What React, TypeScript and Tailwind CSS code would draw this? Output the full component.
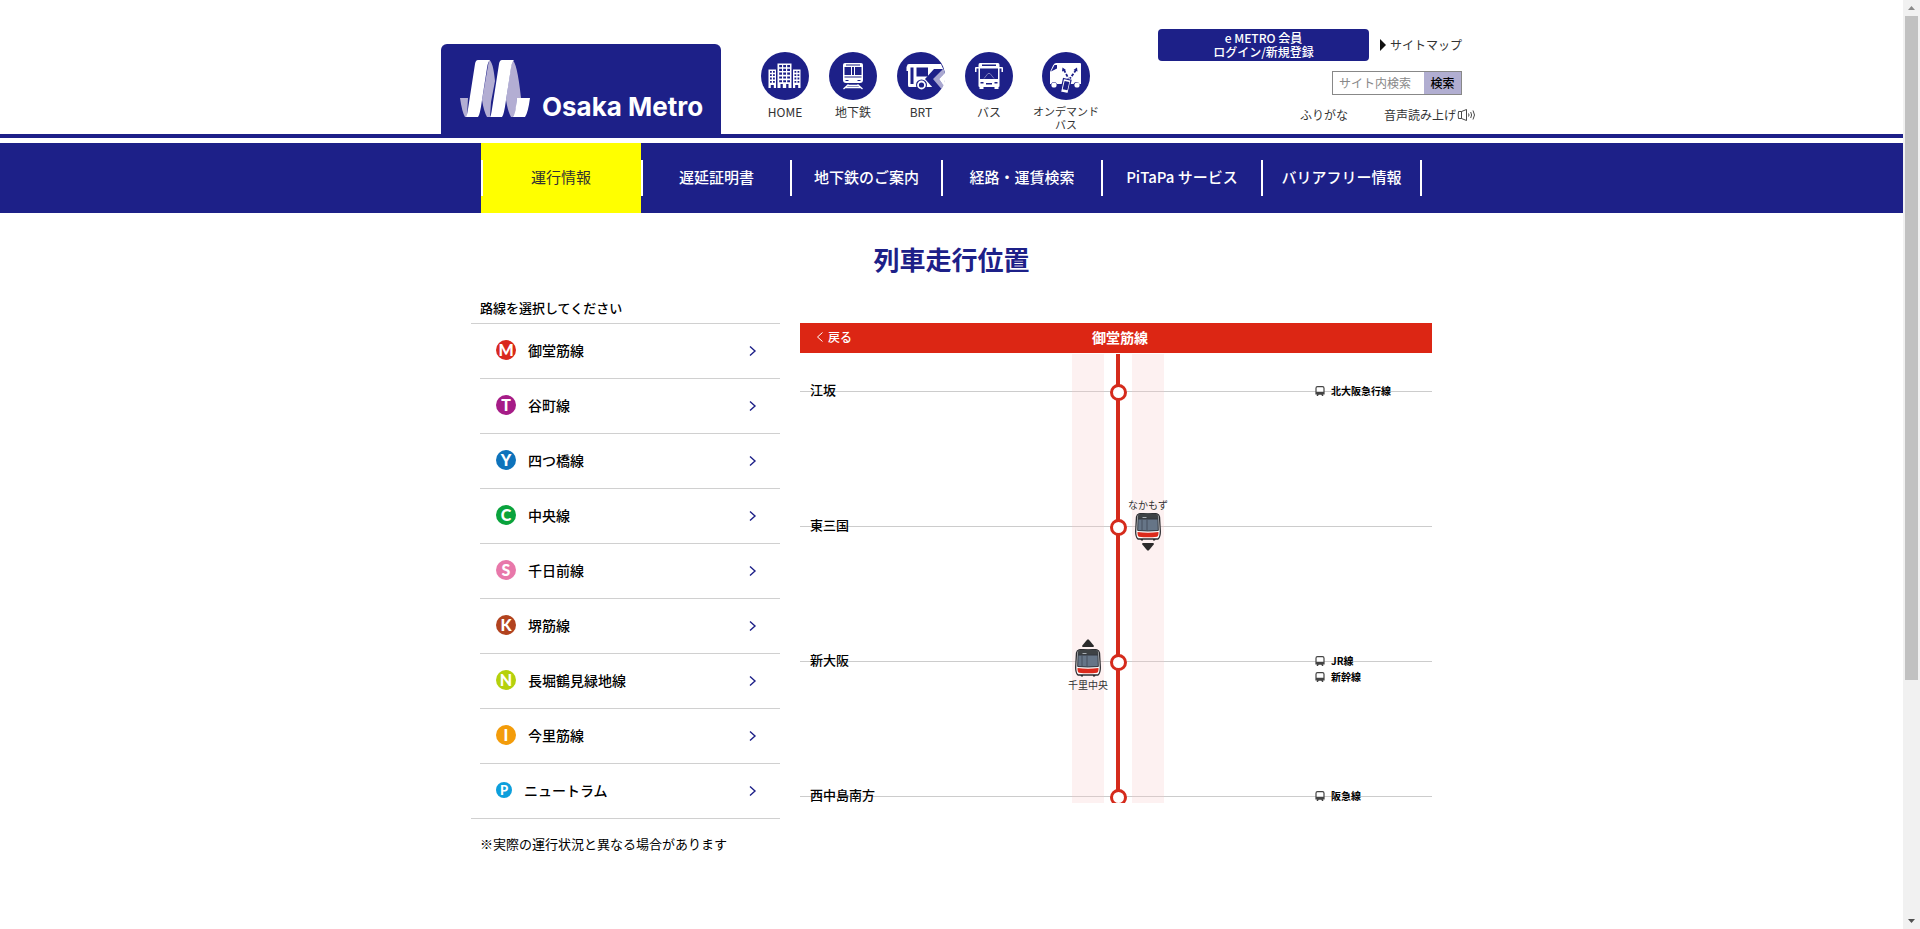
import React from "react";

const Building = () => (
  <svg viewBox="0 0 48 48" className="size-12" aria-hidden="true">
    <circle cx="24" cy="24" r="24" fill="#1d2088" />
    <path
      fill="#fff"
      fillRule="evenodd"
      d="M7.5 17.5h7.5V36h-2.2v-3h-3v3H7.500zM9 19v1.800h1.800V19zm3 0v1.800h1.800V19zM9 22.300v1.800h1.800v-1.800zm3 0v1.800h1.800v-1.800zM9 25.600v1.800h1.800v-1.800zm3 0v1.800h1.800v-1.800zM9 28.900v1.800h1.800v-1.800zm3 0v1.800h1.800v-1.800z
      M16.500 11.500h14V36h-3v-4h-2.300v4h-3.400v-4h-2.300v4h-3zM18.200 13v2.200h2.800V13zm4 0v2.200h2.800V13zm4 0v2.200h2.800V13zM18.200 16.800V19h2.800v-2.200zm4 0V19h2.800v-2.200zm4 0V19h2.800v-2.200zM18.200 20.600v2.200h2.800v-2.200zm4 0v2.200h2.800v-2.200zm4 0v2.200h2.800v-2.200zM18.200 24.400v2.200h2.800v-2.200zm4 0v2.200h2.800v-2.200zm4 0v2.200h2.800v-2.200zM18.200 28.200v2h2.800v-2zm4 0v2h2.800v-2zm4 0v2h2.800v-2z
      M32 17.500h7.500V36h-2.300v-3h-3v3H32zM33.500 19v1.800h1.800V19zm3 0v1.800h1.800V19zM33.500 22.300v1.800h1.800v-1.800zm3 0v1.800h1.800v-1.800zM33.500 25.600v1.800h1.800v-1.800zm3 0v1.800h1.800v-1.800zM33.500 28.900v1.800h1.800v-1.800zm3 0v1.800h1.800v-1.800z"
    />
  </svg>
);

const Subway = () => (
  <svg viewBox="0 0 48 48" className="size-12" aria-hidden="true">
    <circle cx="24" cy="24" r="24" fill="#1d2088" />
    <path d="M16 11h16q2 0 2 2v15q0 3-3 3H17q-3 0-3-3V13q0-2 2-2z" fill="#fff" />
    <path d="M17 12.500h14v1H17zM15.500 15h6.500v8h-6.500zM26 15h6.500v8H26zM23 15h2v8h-2z" fill="#1d2088" />
    <path d="M15.500 24.500h17v1h-17zM16.500 28h3v1h-3zM28.500 28h3v1h-3z" fill="#1d2088" />
    <path d="M19.500 32.500 14.500 37M28.500 32.500l5 4.500M18 33.500h12M16.500 35.500h15" stroke="#fff" strokeWidth="1.300" fill="none" />
  </svg>
);

const Brt = () => (
  <svg viewBox="0 0 48 48" className="size-12" aria-hidden="true">
    <circle cx="24" cy="24" r="24" fill="#1d2088" />
    <path d="M10 14q0-2 2-2h32q3.500 6 3.500 12 0 6-2.500 11H12q-1 0-1-2V19H9.500v-4z" fill="#fff" />
    <path d="M13.500 15.500h3V32h-3zM19.500 15.500H31v9H19.500z" fill="#1d2088" />
    <path d="M37 17h8.500q2.500 7 1.500 13l-3.500 7H37l-9-10z" fill="#1d2088" />
    <path d="M45.500 17.500 36 27l8.500 10 2-3.500L42 27l5.800-6q-.8-2-2.300-3.500z" fill="#aaa8d0" />
    <path d="M47.800 21 42 27l4.500 6.500q2.500-6 1.300-12.500z" fill="#fff" />
    <circle cx="24.500" cy="33" r="5.500" fill="#1d2088" />
    <circle cx="24.500" cy="33" r="3.500" fill="none" stroke="#fff" strokeWidth="1.800" />
  </svg>
);

const Bus = () => (
  <svg viewBox="0 0 48 48" className="size-12" aria-hidden="true">
    <circle cx="24" cy="24" r="24" fill="#1d2088" />
    <path d="M15 11h18q1.500 0 1.500 2v2H37q1 0 1 1v4h-1.500v-3.500h-2V34q0 1-1 1v2h-4v-2h-11v2h-4v-2q-1 0-1-1V16.500h-2V20H10v-4q0-1 1-1h2.500v-2q0-2 1.500-2z" fill="#fff" />
    <path d="M17 12.500h14v1.500H17zM15 16.500h18V27H15zM15.500 30h3v1.500h-3zM29.500 30h3v1.500h-3zM21 31h6v1.500h-6z" fill="#1d2088" />
    <path d="m19 26.500 4-5h2l4 5" stroke="#7c7bb8" fill="none" />
  </svg>
);

const OnDemandBus = () => (
  <svg viewBox="0 0 48 48" className="size-12" aria-hidden="true">
    <circle cx="24" cy="24" r="24" fill="#1d2088" />
    <path d="M16 11h22q1 0 1 1v20h-1.500a3.300 3.300 0 0 0-6 0H15a3.300 3.300 0 0 0-6 0H8V20l3-6.500q1-2.500 3-2.500z" fill="#fff" />
    <path d="m12.500 13-3.500 6.500 6-3V13z" fill="#1d2088" />
    <circle cx="12" cy="33" r="2.600" fill="#fff" />
    <circle cx="35" cy="33" r="2.600" fill="#fff" />
    <path d="m22 18 4.500 8.500M34 18l-6 8.500" stroke="#1d2088" strokeWidth="1.800" strokeDasharray="3 1.500" fill="none" />
    <path d="m20 19.500 0.500-4 3.500 2.500zM35.500 19.500l-.5-4-3.500 2.500z" fill="#1d2088" />
    <path d="m21.500 26.500 7.500 1.700-3 13.500-7.500-1.700z" fill="#fff" stroke="#1d2088" strokeWidth="1.200" />
    <path d="m22.600 29 4.700 1-1.900 8.300-4.700-1z" fill="#1d2088" />
  </svg>
);

const shortcuts = [
  { label: "HOME", icon: Building },
  { label: "地下鉄", icon: Subway },
  { label: "BRT", icon: Brt },
  { label: "バス", icon: Bus },
];

const menu = ["遅延証明書", "地下鉄のご案内", "経路・運賃検索", "PiTaPa サービス", "バリアフリー情報"];

const lines = [
  { code: "M", name: "御堂筋線", color: "bg-[#d9291c]" },
  { code: "T", name: "谷町線", color: "bg-[#a61c87]" },
  { code: "Y", name: "四つ橋線", color: "bg-[#0e73bb]" },
  { code: "C", name: "中央線", color: "bg-[#0aa33c]" },
  { code: "S", name: "千日前線", color: "bg-[#e878aa]" },
  { code: "K", name: "堺筋線", color: "bg-[#b2431f]" },
  { code: "N", name: "長堀鶴見緑地線", color: "bg-[#b5d10c]" },
  { code: "I", name: "今里筋線", color: "bg-[#f39c0a]" },
];

const stations = [
  { name: "江坂", transfers: ["北大阪急行線"] },
  { name: "東三国", transfers: [] },
  { name: "新大阪", transfers: ["JR線", "新幹線"] },
  { name: "西中島南方", transfers: ["阪急線"] },
];

const Chevron = () => (
  <svg viewBox="0 0 8 12" className="h-3 w-2" fill="none" stroke="#1d2088" strokeWidth="1.400" aria-hidden="true">
    <path d="m1 1.500 5 4.500-5 4.500" />
  </svg>
);

const TransferIcon = () => (
  <svg viewBox="0 0 10 10" className="size-[10px]" aria-hidden="true">
    <path d="M2.500.7h5q1.500 0 1.500 1.500V8H1V2.200Q1 .7 2.500.7z" fill="#fff" stroke="#444" strokeWidth="1.200" />
    <path d="M1 5.800h8V7.500l-1 1H2l-1-1zM2.500 8h1.500l-1 2H1.500zM6 8h1.500l1 2H7z" fill="#444" />
  </svg>
);

const Train = () => (
  <svg viewBox="0 0 26 28" className="block h-7 w-[26px]" aria-hidden="true">
    <path d="M5 25h3v2.500H6zM18 25h3l-1 2.500h-2z" fill="#222" />
    <path d="M4 .8Q13-.4 22 .8q2 .5 2.500 3L25.300 18q.2 6-2.300 8H3Q.5 24 .7 18L1.500 3.800Q2 1.300 4 .8z" fill="#fff" stroke="#2c2c30" strokeWidth="1.300" />
    <path d="M4.500 1Q13 0 21.500 1q1.500.5 2 3v2h-21V4q.5-2.500 2-3z" fill="#3e4245" />
    <path d="M3 6h20l.3 11.500q-10 1-20.600 0z" fill="#667587" stroke="#32373f" strokeWidth="1" />
    <path d="M7 6v11M12 6v11.500" stroke="#46505e" strokeWidth="1" />
    <path d="M7.500 4h4v1h-4z" fill="#a9afb5" />
    <path d="M2.500 19q10.500 1.500 21 0 .2 4-1.500 4.800-9 1-18 0Q2.300 23 2.500 19z" fill="#dc2a1c" />
  </svg>
);

function Logo() {
  return (
    <a href="#" className="flex h-[90px] w-[280px] shrink-0 items-end gap-3 self-end rounded-t-md bg-[#1d2088] pb-[17px] pl-[19px]">
      <svg viewBox="0 0 70 57" className="h-[57px] w-[70px] shrink-0" aria-hidden="true">
        <path d="M0 38h8l-1 19H5Q2 52 0 38zM29 0q4 1 6 21l-4 21-1 15h-3Q24 52 22 40zM52 0q5 1 9 38h-4l-2 19h-4Q48 52 46 40z" fill="#b3aed3" />
        <path d="M15 4q.6-4 3-4h12q-2 1-3 8l-5 32q-2 15-4 17H6q1-1 2-8zM39 4q.6-4 3-4h12q-2 1-3 8l-5 32q-2 15-4 17H30q1-1 2-8zM57 38h13q-2 15-5 19H53q2-2 3-11z" fill="#fff" />
      </svg>
      <span className="-mb-[6px] font-[Inter,sans-serif] text-[26px] leading-8 font-bold whitespace-nowrap text-white">Osaka Metro</span>
    </a>
  );
}

function Header() {
  return (
    <header className="border-b-4 border-[#1d2088]">
      <div className="mx-auto flex h-[134px] max-w-[1021px] items-start">
        <Logo />
        <nav aria-label="サイト" className="ml-10 flex gap-5 pt-[52px] text-center text-xs leading-[13px] text-[#333]">
          {shortcuts.map(({ label, icon: Icon }) => (
            <a key={label} href="#" className="flex w-12 flex-col items-center gap-[5px] whitespace-nowrap">
              <Icon />
              {label}
            </a>
          ))}
          <a href="#" className="flex w-[66px] flex-col items-center gap-[5px] text-[11px] leading-[13px] whitespace-nowrap">
            <OnDemandBus />
            <span>
              オンデマンド
              <br />
              バス
            </span>
          </a>
        </nav>
        <div className="ml-auto flex w-[304px] flex-col items-end pt-[29px] text-xs text-[#333]">
          <div className="flex w-full items-center justify-between">
            <a href="#" className="w-[211px] rounded bg-[#1d2088] py-[2px] text-center leading-[14px] font-medium text-white">
              e METRO 会員
              <br />
              ログイン/新規登録
            </a>
            <a href="#" className="flex items-center gap-1">
              <svg viewBox="0 0 6 12" className="h-3 w-[6px]" aria-hidden="true">
                <path d="M0 0l6 6-6 6z" fill="#111" />
              </svg>
              サイトマップ
            </a>
          </div>
          <form className="mt-[10px] flex h-6 w-[130px] border border-[#888]" onSubmit={(e) => e.preventDefault()}>
            <input type="search" aria-label="サイト内検索" placeholder="サイト内検索" className="min-w-0 flex-1 bg-white pl-[6px] placeholder:text-[#888]" />
            <button type="submit" className="w-[37px] bg-[#b1aed1] font-medium text-black">
              検索
            </button>
          </form>
          <div className="-mr-[14px] mt-3 flex items-center gap-9 leading-4 whitespace-nowrap">
            <a href="#">ふりがな</a>
            <a href="#" className="flex items-center">
              音声読み上げ
              <svg viewBox="0 0 20 12" className="h-3 w-5" fill="none" stroke="#333" strokeWidth=".9" aria-hidden="true">
                <path d="M5.500 2.500h-3q-.7 3.500 0 7h3zM5.500 2.500 10.500.5v11l-5-2M12.500 4.500q1 1.500 0 3M14.700 3q1.800 3 0 6M17 1.500q3 4.500 0 9" />
              </svg>
            </a>
          </div>
        </div>
      </div>
    </header>
  );
}

function MainMenu() {
  return (
    <nav aria-label="メイン" className="mt-[5px] bg-[#1d2088] text-[15px] leading-[34px] font-medium text-white">
      <div className="mx-auto grid h-[70px] max-w-[941px] grid-cols-[160fr_151fr_151fr_160fr_160fr_159fr] items-center text-center whitespace-nowrap">
        <a href="#" aria-current="page" className="flex h-full items-center bg-[#ff0] font-normal text-[#333]">
          <span className="h-9 flex-1 border-l-2 border-white pr-[2px]">運行情報</span>
        </a>
        {menu.map((m) => (
          <a key={m} href="#" className="h-9 border-r-2 border-white nth-2:border-l-2">
            {m}
          </a>
        ))}
      </div>
    </nav>
  );
}

function LineList() {
  return (
    <section className="w-[309px] shrink-0 text-black">
      <h2 className="pl-[9px] text-[13px] leading-5 font-medium">路線を選択してください</h2>
      <ul className="mt-[5px] border-y border-[#d0d0d0] text-sm font-medium">
        {lines.map((l) => (
          <li key={l.code} className="ml-[9px] border-b border-[#d0d0d0]">
            <a href="#" className="flex h-[54px] items-center pr-[23px] pl-4">
              <span className="flex flex-1 items-center gap-3 pb-[2px]">
                <span className={"flex size-5 items-center justify-center rounded-full font-[Lato,sans-serif] text-base leading-5 font-black text-white " + l.color}>
                  {l.code}
                </span>
                {l.name}
              </span>
              <Chevron />
            </a>
          </li>
        ))}
        <li className="ml-[9px]">
          <a href="#" className="flex h-[54px] items-center pr-[23px] pl-4">
            <span className="flex flex-1 items-center gap-3 pb-[2px]">
              <span className="flex size-4 items-center justify-center rounded-full bg-[#0d9fdc] font-[Lato,sans-serif] text-[13px] leading-4 font-black text-white">P</span>
              ニュートラム
            </span>
            <Chevron />
          </a>
        </li>
      </ul>
      <p className="mt-[15px] pl-[9px] text-[13px] leading-5">※実際の運行状況と異なる場合があります</p>
    </section>
  );
}

function TrainMap() {
  return (
    <section className="mt-[25px] min-w-0 flex-1">
      <div className="grid h-[30px] grid-cols-3 items-center bg-[#dc2614] pr-2 pb-[2px] pl-4 text-white">
        <a href="#" className="flex items-center gap-1 text-xs font-medium">
          <svg viewBox="0 0 8 12" className="h-3 w-2" fill="none" stroke="#fff" aria-hidden="true">
            <path d="M6.500 1.500 1.500 6l5 4.500" />
          </svg>
          戻る
        </a>
        <h2 className="text-center text-sm leading-5 font-bold">御堂筋線</h2>
      </div>
      <div className="relative mt-px h-[449px] overflow-hidden">
        <ul className="pt-[37px]">
          {stations.map((s) => (
            <li key={s.name} className="h-[135px] border-t border-[#ccc]">
              <div className="-mt-3 flex pr-[10px] pl-[10px] text-black">
                <a href="#" className="flex-1 text-[13px] leading-5 font-medium">
                  {s.name}
                </a>
                <ul className="w-[107px] pt-[3px] text-[10px] leading-4 font-bold">
                  {s.transfers.map((t) => (
                    <li key={t} className="flex items-center gap-[6px]">
                      <TransferIcon />
                      {t}
                    </li>
                  ))}
                </ul>
              </div>
            </li>
          ))}
        </ul>
        <div className="absolute inset-y-0 left-[calc(50%-44px)] flex gap-3">
          <div className="w-8 bg-[#f8c8c8]/25" />
          <div className="flex w-1 flex-col items-center gap-[118px] bg-[#d52b1c] pt-[30px]">
            {stations.map((s) => (
              <span key={s.name} className="size-[17px] shrink-0 rounded-full border-3 border-[#d52b1c] bg-white" />
            ))}
          </div>
          <div className="w-8 bg-[#f8c8c8]/25" />
          <div className="absolute top-[145px] left-[56px] flex w-10 flex-col items-center gap-[2px] text-[10px] leading-3 whitespace-nowrap text-[#333]">
            なかもず
            <Train />
            <svg viewBox="0 0 12 8" className="h-2 w-3" aria-hidden="true">
              <path d="M.3 0h11.400v1.500L6.700 7.500H5.300L.3 1.500z" fill="#2b2b2b" />
            </svg>
          </div>
          <div className="absolute top-[285px] -left-1 flex w-10 flex-col items-center gap-[2px] text-[10px] leading-3 whitespace-nowrap text-[#333]">
            <svg viewBox="0 0 12 8" className="h-2 w-3" aria-hidden="true">
              <path d="M.3 8h11.400V6.500L6.700.5H5.300L.3 6.500z" fill="#2b2b2b" />
            </svg>
            <Train />
            千里中央
          </div>
        </div>
      </div>
    </section>
  );
}

export default function App() {
  return (
    <div className="flex min-h-screen bg-white font-['Noto_Sans_CJK_JP',sans-serif]">
      <div className="min-w-0 flex-1">
        <Header />
        <MainMenu />
        <main className="mx-auto max-w-[961px] pt-[26px]">
          <h1 className="text-center text-[26px] leading-10 font-bold text-[#1d2088]">列車走行位置</h1>
          <div className="mt-[19px] flex items-start gap-5">
            <LineList />
            <TrainMap />
          </div>
        </main>
      </div>
      <div aria-hidden="true" className="sticky top-0 flex h-screen w-[17px] shrink-0 flex-col items-center bg-[#f1f1f1]">
        <svg viewBox="0 0 17 16" className="h-4 w-[17px] shrink-0">
          <path d="M5 10h7L8.500 6z" fill="#8a8a8a" />
        </svg>
        <div className="min-h-0 flex-1">
          <div className="h-[74%] w-[13px] bg-[#c1c1c1]" />
        </div>
        <svg viewBox="0 0 17 16" className="h-4 w-[17px] shrink-0">
          <path d="M5 6h7l-3.500 4z" fill="#505050" />
        </svg>
      </div>
    </div>
  );
}
